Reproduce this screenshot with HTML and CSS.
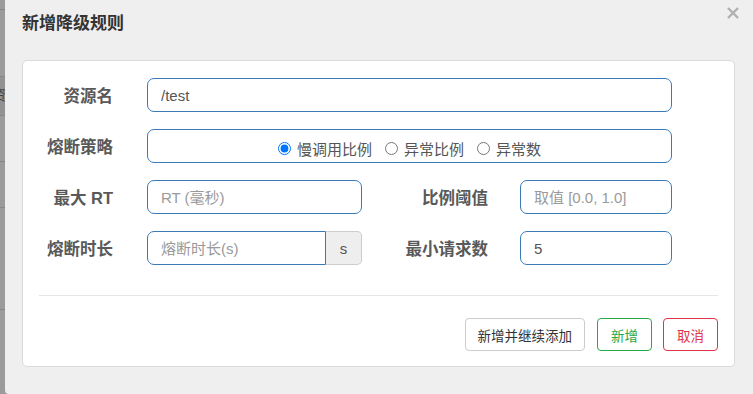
FILE: index.html
```html
<!DOCTYPE html>
<html lang="zh-CN">
<head>
  <meta charset="UTF-8">
  <title>新增降级规则</title>
  <link rel="stylesheet" href="styles.css">
</head>
<body>
  <div class="backdrop">
    <div class="bd-row" style="height:10px"></div>
    <div class="bd-row" style="height:67px"></div>
    <div class="bd-row bd-dark" style="height:39px"><span>资</span></div>
    <div class="bd-row" style="height:46px"></div>
    <div class="bd-row" style="height:46px"></div>
    <div class="bd-row" style="height:102px"></div>
  </div>

  <div class="modal">
    <div class="modal-header">
      <h3 class="modal-title">新增降级规则</h3>
      <button class="close" type="button">
        <svg width="12" height="12" viewBox="0 0 12 12"><path d="M1 1L11 11M11 1L1 11" stroke="#b0b0b0" stroke-width="2.4"/></svg>
      </button>
    </div>

    <div class="panel">
      <form class="form">
        <div class="row">
          <label class="label">资源名</label>
          <input class="input input-wide" type="text" value="/test">
        </div>

        <div class="row">
          <label class="label">熔断策略</label>
          <div class="radio-box">
            <label class="radio"><input type="radio" name="grade" checked>慢调用比例</label>
            <label class="radio"><input type="radio" name="grade">异常比例</label>
            <label class="radio"><input type="radio" name="grade">异常数</label>
          </div>
        </div>

        <div class="row">
          <label class="label">最大 RT</label>
          <input class="input input-half" type="text" placeholder="RT (毫秒)">
          <label class="label label-right">比例阈值</label>
          <input class="input input-small" type="text" placeholder="取值 [0.0, 1.0]">
        </div>

        <div class="row">
          <label class="label">熔断时长</label>
          <div class="input-group">
            <input class="input input-grouped" type="text" placeholder="熔断时长(s)">
            <span class="addon">s</span>
          </div>
          <label class="label label-right">最小请求数</label>
          <input class="input input-small" type="text" value="5">
        </div>
      </form>

      <div class="divider"></div>

      <div class="actions">
        <button class="btn btn-default" type="button">新增并继续添加</button>
        <button class="btn btn-success" type="button">新增</button>
        <button class="btn btn-danger" type="button">取消</button>
      </div>
    </div>
  </div>
</body>
</html>
```

FILE: styles.css
```css
* {
  box-sizing: border-box;
  margin: 0;
  padding: 0;
}

body {
  width: 753px;
  height: 394px;
  overflow: hidden;
  display: flex;
  font-family: "Liberation Sans", "Noto Sans CJK SC", sans-serif;
  color: #555;
  background: #9b9b9b;
}

/* page behind the dialog */
.backdrop {
  width: 5px;
  flex-shrink: 0;
  background: #9b9b9b;
  overflow: hidden;
}

.bd-row {
  border-bottom: 1px solid #878787;
  position: relative;
}

.bd-dark {
  background: #929292;
}

.bd-dark span {
  position: absolute;
  right: -1px;
  top: 10px;
  font-size: 14px;
  line-height: 16px;
  color: #444;
}

/* dialog */
.modal {
  flex: 1;
  background: #efefef;
  border-bottom-left-radius: 4px;
  padding: 0 18px 0 17px;
}

.modal-header {
  height: 60px;
  display: flex;
  align-items: flex-start;
  justify-content: space-between;
}

.modal-title {
  font-size: 17px;
  font-weight: bold;
  color: #333;
  line-height: 24px;
  margin-top: 12px;
}

.close {
  border: none;
  background: none;
  margin-top: 6px;
  margin-right: -5px;
  width: 14px;
  height: 14px;
  display: flex;
  align-items: center;
  justify-content: center;
}

.panel {
  background: #fff;
  border: 1px solid #dadada;
  border-radius: 5px;
  height: 307px;
  padding: 17px 16px 0;
}

.row {
  display: flex;
  align-items: center;
  height: 34px;
  margin-bottom: 17px;
}

.label {
  width: 74px;
  margin-right: 34px;
  text-align: right;
  font-size: 16.5px;
  font-weight: bold;
  color: #595959;
  white-space: nowrap;
  flex-shrink: 0;
}

.label-right {
  width: 126px;
  margin-right: 32px;
}

.input {
  height: 34px;
  border: 1px solid #3a7ab9;
  border-radius: 7px;
  padding: 0 13px;
  font-family: inherit;
  font-size: 15px;
  color: #555;
  background: #fff;
  outline: none;
}

.input::placeholder {
  color: #9a9a9a;
}

.input-wide {
  width: 525px;
}

.input-half {
  width: 215px;
}

.input-small {
  width: 152px;
}

.radio-box {
  width: 525px;
  height: 34px;
  border: 1px solid #3a7ab9;
  border-radius: 7px;
  display: flex;
  align-items: center;
  justify-content: center;
  gap: 13px;
  padding-top: 4px;
}

.radio {
  display: flex;
  align-items: center;
  font-size: 15px;
  color: #555;
}

.radio input {
  width: 13px;
  height: 13px;
  margin: 0 6px 0 0;
}

.input-group {
  display: flex;
  width: 215px;
}

.input-grouped {
  width: 179px;
  border-radius: 7px 0 0 7px;
}

.addon {
  width: 36px;
  height: 34px;
  background: #eee;
  border: 1px solid #ccc;
  border-left: none;
  border-radius: 0 5px 5px 0;
  display: flex;
  align-items: center;
  justify-content: center;
  font-size: 15px;
  color: #555;
}

.divider {
  border-top: 1px solid #e5e5e5;
  margin-top: 30px;
}

.actions {
  display: flex;
  justify-content: flex-end;
  gap: 11px;
  margin-top: 22px;
}

.btn {
  height: 33px;
  padding: 0 13px;
  border-radius: 4px;
  background: #fff;
  font-family: inherit;
  font-size: 13.5px;
}

.btn-default {
  border: 1px solid #ccc;
  color: #333;
  padding: 0 12px;
  margin-right: 1px;
}

.btn-success {
  border: 1px solid #28a745;
  color: #28a745;
}

.btn-danger {
  border: 1px solid #dc3545;
  color: #dc3545;
}
```
